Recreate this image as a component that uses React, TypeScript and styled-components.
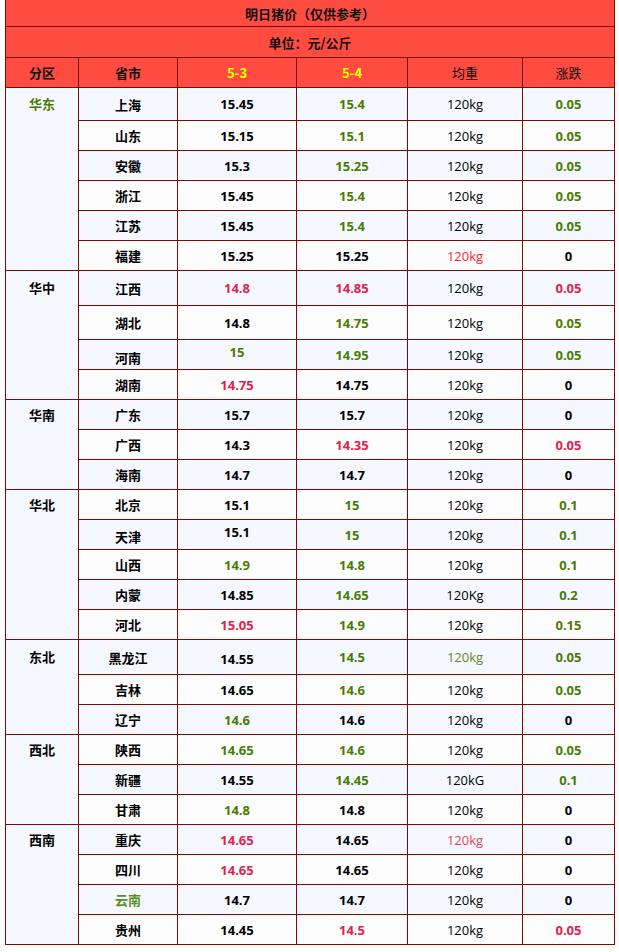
import React from 'react';
import styled, { createGlobalStyle } from 'styled-components';

type Tone = 'black' | 'green' | 'red' | 'bright' | 'pink' | 'olive';

interface Value {
  v: string;
  tone: Tone;
  shift?: number;
}

interface Row {
  city: string;
  cityTone?: Tone;
  cityShift?: number;
  a: Value;
  b: Value;
  w: Value;
  d: Value;
  h?: number;
}

interface Region {
  name: string;
  tone?: Tone;
  rows: Row[];
}

const TONES: Record<Tone, string> = {
  black: '#000000',
  green: '#4a7c00',
  red: '#e2224b',
  bright: '#ff1e2a',
  pink: '#ee4258',
  olive: '#5f8c22',
};

const n = (v: string, tone: Tone = 'black', shift = 0): Value => ({ v, tone, shift });
const kg = (tone: Tone = 'black', v = '120kg'): Value => ({ v, tone });

const REGIONS: Region[] = [
  {
    name: '华东',
    tone: 'green',
    rows: [
      { city: '上海', a: n('15.45'), b: n('15.4', 'green'), w: kg(), d: n('0.05', 'green'), h: 32 },
      { city: '山东', a: n('15.15'), b: n('15.1', 'green'), w: kg(), d: n('0.05', 'green') },
      { city: '安徽', a: n('15.3'), b: n('15.25', 'green'), w: kg(), d: n('0.05', 'green') },
      { city: '浙江', a: n('15.45'), b: n('15.4', 'green'), w: kg(), d: n('0.05', 'green') },
      { city: '江苏', a: n('15.45'), b: n('15.4', 'green'), w: kg(), d: n('0.05', 'green') },
      { city: '福建', a: n('15.25'), b: n('15.25'), w: kg('bright'), d: n('0') },
    ],
  },
  {
    name: '华中',
    rows: [
      { city: '江西', a: n('14.8', 'red'), b: n('14.85', 'red'), w: kg(), d: n('0.05', 'red'), h: 34 },
      { city: '湖北', a: n('14.8'), b: n('14.75', 'green'), w: kg(), d: n('0.05', 'green'), h: 33 },
      { city: '河南', cityShift: 3, a: n('15', 'green', -3), b: n('14.95', 'green'), w: kg(), d: n('0.05', 'green') },
      { city: '湖南', a: n('14.75', 'red'), b: n('14.75'), w: kg(), d: n('0') },
    ],
  },
  {
    name: '华南',
    rows: [
      { city: '广东', a: n('15.7'), b: n('15.7'), w: kg(), d: n('0') },
      { city: '广西', a: n('14.3'), b: n('14.35', 'red'), w: kg(), d: n('0.05', 'red') },
      { city: '海南', a: n('14.7'), b: n('14.7'), w: kg(), d: n('0') },
    ],
  },
  {
    name: '华北',
    rows: [
      { city: '北京', a: n('15.1'), b: n('15', 'green'), w: kg(), d: n('0.1', 'green') },
      { city: '天津', cityShift: 2, a: n('15.1', 'black', -3), b: n('15', 'green'), w: kg(), d: n('0.1', 'green') },
      { city: '山西', a: n('14.9', 'green'), b: n('14.8', 'green'), w: kg(), d: n('0.1', 'green') },
      { city: '内蒙', a: n('14.85'), b: n('14.65', 'green'), w: kg('black', '120Kg'), d: n('0.2', 'green') },
      { city: '河北', a: n('15.05', 'red'), b: n('14.9', 'green'), w: kg(), d: n('0.15', 'green') },
    ],
  },
  {
    name: '东北',
    rows: [
      { city: '黑龙江', a: n('14.55', 'black', 2), b: n('14.5', 'green'), w: kg('olive'), d: n('0.05', 'green'), h: 34 },
      { city: '吉林', a: n('14.65'), b: n('14.6', 'green'), w: kg(), d: n('0.05', 'green') },
      { city: '辽宁', a: n('14.6', 'green'), b: n('14.6'), w: kg(), d: n('0') },
    ],
  },
  {
    name: '西北',
    rows: [
      { city: '陕西', a: n('14.65', 'green'), b: n('14.6', 'green'), w: kg(), d: n('0.05', 'green') },
      { city: '新疆', a: n('14.55'), b: n('14.45', 'green'), w: kg('black', '120kG'), d: n('0.1', 'green') },
      { city: '甘肃', a: n('14.8', 'green'), b: n('14.8'), w: kg(), d: n('0') },
    ],
  },
  {
    name: '西南',
    rows: [
      { city: '重庆', a: n('14.65', 'red'), b: n('14.65'), w: kg('pink'), d: n('0') },
      { city: '四川', a: n('14.65', 'red'), b: n('14.65'), w: kg(), d: n('0') },
      { city: '云南', cityTone: 'olive', a: n('14.7'), b: n('14.7'), w: kg(), d: n('0') },
      { city: '贵州', a: n('14.45'), b: n('14.5', 'red'), w: kg(), d: n('0.05', 'red') },
    ],
  },
];

const ROW_H = 29;

export default function App() {
  const heights = REGIONS.flatMap((r) => r.rows.map((row) => `${row.h ?? ROW_H}px`));
  const template = ['26px', '30px', '29px', ...heights].join(' ');
  let index = 0;

  return (
    <Page>
      <GlobalStyle />
      <Sheet $rows={template}>
        <Banner>明日猪价（仅供参考）</Banner>
        <Banner>单位：元/公斤</Banner>
        <HeadCell $bold>分区</HeadCell>
        <HeadCell $bold>省市</HeadCell>
        <HeadCell $bold $date>5-3</HeadCell>
        <HeadCell $bold $date>5-4</HeadCell>
        <HeadCell>均重</HeadCell>
        <HeadCell>涨跌</HeadCell>
        {REGIONS.map((region) => (
          <React.Fragment key={region.name}>
            <RegionCell
              $span={region.rows.length}
              $lead={region.rows[0].h ?? ROW_H}
              $tone={region.tone ?? 'black'}
            >
              {region.name}
            </RegionCell>
            {region.rows.map((row) => {
              const alt = index++ % 2 === 1;
              return (
                <React.Fragment key={row.city}>
                  <Cell $alt={alt} $tone={row.cityTone ?? 'black'} $shift={row.cityShift ?? 0} $bold>
                    {row.city}
                  </Cell>
                  <Cell $alt={alt} $tone={row.a.tone} $shift={row.a.shift ?? 0} $bold>
                    {row.a.v}
                  </Cell>
                  <Cell $alt={alt} $tone={row.b.tone} $shift={row.b.shift ?? 0} $bold>
                    {row.b.v}
                  </Cell>
                  <Cell $alt={alt} $tone={row.w.tone} $shift={0}>
                    {row.w.v}
                  </Cell>
                  <Cell $alt={alt} $tone={row.d.tone} $shift={0} $bold>
                    {row.d.v}
                  </Cell>
                </React.Fragment>
              );
            })}
          </React.Fragment>
        ))}
      </Sheet>
    </Page>
  );
}

const GlobalStyle = createGlobalStyle`
  body {
    margin: 0;
    background: #ffffff;
    font-family: "Open Sans", "Noto Sans CJK SC", sans-serif;
    font-size: 13px;
    color: #000;
  }
`;

const Page = styled.div`
  padding: 0 0 0 5px;
`;

const Sheet = styled.div<{ $rows: string }>`
  display: grid;
  grid-template-columns: 72px 98px 118px 110px 114px 91px;
  grid-template-rows: ${(p) => p.$rows};
  gap: 1px;
  padding: 0 1px 1px;
  width: max-content;
  background: #7d0a00;
`;

const Banner = styled.div`
  grid-column: 1 / -1;
  display: flex;
  align-items: center;
  justify-content: center;
  background: #ff4c40;
  font-weight: bold;
  font-family: "Noto Sans CJK SC", sans-serif;
  color: #111;
`;

const HeadCell = styled.div<{ $bold?: boolean; $date?: boolean }>`
  display: flex;
  align-items: center;
  justify-content: center;
  background: #ff4c40;
  font-family: "Noto Sans CJK SC", sans-serif;
  font-weight: ${(p) => (p.$bold ? 'bold' : 'normal')};
  color: ${(p) => (p.$date ? '#ffff00' : '#111')};
`;

const RegionCell = styled.div<{ $span: number; $lead: number; $tone: Tone }>`
  grid-row: span ${(p) => p.$span};
  background: #f5f9ff;
  text-align: center;
  line-height: ${(p) => p.$lead}px;
  font-family: "Noto Sans CJK SC", sans-serif;
  font-weight: bold;
  color: ${(p) => TONES[p.$tone]};
`;

const Cell = styled.div<{ $alt: boolean; $tone: Tone; $shift: number; $bold?: boolean }>`
  display: flex;
  align-items: center;
  justify-content: center;
  padding-top: ${(p) => Math.max(p.$shift, 0) * 2}px;
  padding-bottom: ${(p) => Math.max(-p.$shift, 0) * 2}px;
  background: ${(p) => (p.$alt ? '#fdfdfd' : '#f5f9ff')};
  color: ${(p) => TONES[p.$tone]};
  font-weight: ${(p) => (p.$bold ? 'bold' : 'normal')};
`;
